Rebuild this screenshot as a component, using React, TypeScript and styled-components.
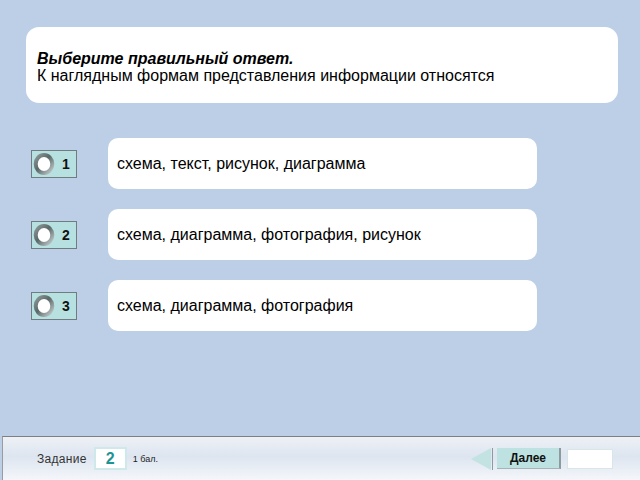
import * as React from "react"
import styled, { createGlobalStyle } from "styled-components"

const GlobalStyle = createGlobalStyle`
  html, body {
    margin: 0;
    padding: 0;
  }
  body {
    font-family: "Liberation Sans", Arial, sans-serif;
    background: #bccfe7;
  }
`

const Page = styled.div`
  width: 640px;
  height: 480px;
  display: flex;
  flex-direction: column;
  background: #bccfe7;
  overflow: hidden;
`

const Main = styled.div`
  flex: 1;
  padding: 27px 22px 0 26px;
  display: flex;
  flex-direction: column;
`

const QuestionCard = styled.div`
  height: 76px;
  box-sizing: border-box;
  background: #fff;
  border-radius: 13px;
  padding: 23px 10px 0 11px;
  font-size: 16px;
  line-height: 17px;
  color: #000;
`

const QuestionTitle = styled.div`
  font-weight: bold;
  font-style: italic;
`

const AnswerList = styled.div`
  margin-top: 35px;
  display: flex;
  flex-direction: column;
  gap: 20px;
  padding-left: 5px;
`

const AnswerRow = styled.div`
  display: flex;
  align-items: center;
  gap: 31px;
`

const Check = styled.div`
  width: 46px;
  height: 28px;
  box-sizing: border-box;
  background: #b7e1e0;
  border: 1px solid #707c80;
  display: flex;
  align-items: center;
  padding-left: 0;
  gap: 6px;
`

const CheckNum = styled.span`
  font-size: 14px;
  font-weight: bold;
  color: #111;
`

const AnswerCard = styled.div`
  width: 429px;
  height: 51px;
  box-sizing: border-box;
  background: #fff;
  border-radius: 10px;
  display: flex;
  align-items: center;
  padding-left: 9px;
  font-size: 16px;
  color: #000;
`

const Footer = styled.div`
  height: 44px;
  box-sizing: border-box;
  margin: 0 0 0 2px;
  border-top: 1px solid #7d7f82;
  border-left: 1px solid #9a9ca0;
  background: linear-gradient(to bottom, #eef1f6 0%, #dde5f0 45%, #f4f6fa 100%);
  display: flex;
  align-items: center;
  padding: 0 27px 0 34px;
`

const TaskLabel = styled.span`
  font-size: 12px;
  color: #333;
  letter-spacing: 0.3px;
`

const TaskBox = styled.div`
  margin-left: 7px;
  width: 33px;
  height: 23px;
  box-sizing: border-box;
  background: #fff;
  border: 2px solid #cfe9ea;
  display: flex;
  align-items: center;
  justify-content: center;
  font-size: 16px;
  font-weight: bold;
  color: #1e9394;
`

const Points = styled.span`
  margin-left: 6px;
  font-size: 9px;
  color: #222;
`

const Spacer = styled.div`
  flex: 1;
`

const BackArrow = styled.div`
  width: 0;
  height: 0;
  border-top: 11px solid transparent;
  border-bottom: 11px solid transparent;
  border-right: 20px solid #c3e3e3;
`

const Divider = styled.div`
  width: 1px;
  height: 22px;
  background: #8e9a9e;
  margin-left: 1px;
`

const NextButton = styled.div`
  margin-left: 4px;
  width: 64px;
  height: 21px;
  box-sizing: border-box;
  background: #bde2e1;
  border-right: 2px solid #8e9a9e;
  border-bottom: 1px solid #a6b4b6;
  display: flex;
  align-items: center;
  justify-content: center;
  font-size: 12px;
  font-weight: bold;
  color: #111;
`

const BlankBox = styled.div`
  margin-left: 6px;
  width: 44px;
  height: 18px;
  background: #fff;
  border: 1px solid #d8e6ea;
`

const Ring: React.FC = () => (
  <svg width="24" height="24" viewBox="0 0 24 24">
    <defs>
      <linearGradient id="ringg" x1="0" y1="0" x2="1" y2="1">
        <stop offset="0" stopColor="#8d9999" />
        <stop offset="0.45" stopColor="#5b6868" />
        <stop offset="1" stopColor="#c3cccc" />
      </linearGradient>
    </defs>
    <ellipse cx="12" cy="12" rx="8.3" ry="9" fill="#fff" stroke="url(#ringg)" strokeWidth="4" />
  </svg>
)

const answers = [
  "схема, текст, рисунок, диаграмма",
  "схема, диаграмма, фотография, рисунок",
  "схема, диаграмма, фотография",
]

const App: React.FC = () => {
  return (
    <Page>
      <GlobalStyle />
      <Main>
        <QuestionCard>
          <QuestionTitle>Выберите правильный ответ.</QuestionTitle>
          <div>К наглядным формам представления информации относятся</div>
        </QuestionCard>
        <AnswerList>
          {answers.map((a, i) => (
            <AnswerRow key={i}>
              <Check>
                <Ring />
                <CheckNum>{i + 1}</CheckNum>
              </Check>
              <AnswerCard>{a}</AnswerCard>
            </AnswerRow>
          ))}
        </AnswerList>
      </Main>
      <Footer>
        <TaskLabel>Задание</TaskLabel>
        <TaskBox>2</TaskBox>
        <Points>1 бал.</Points>
        <Spacer />
        <BackArrow />
        <Divider />
        <NextButton>Далее</NextButton>
        <BlankBox />
      </Footer>
    </Page>
  )
}

export default App
